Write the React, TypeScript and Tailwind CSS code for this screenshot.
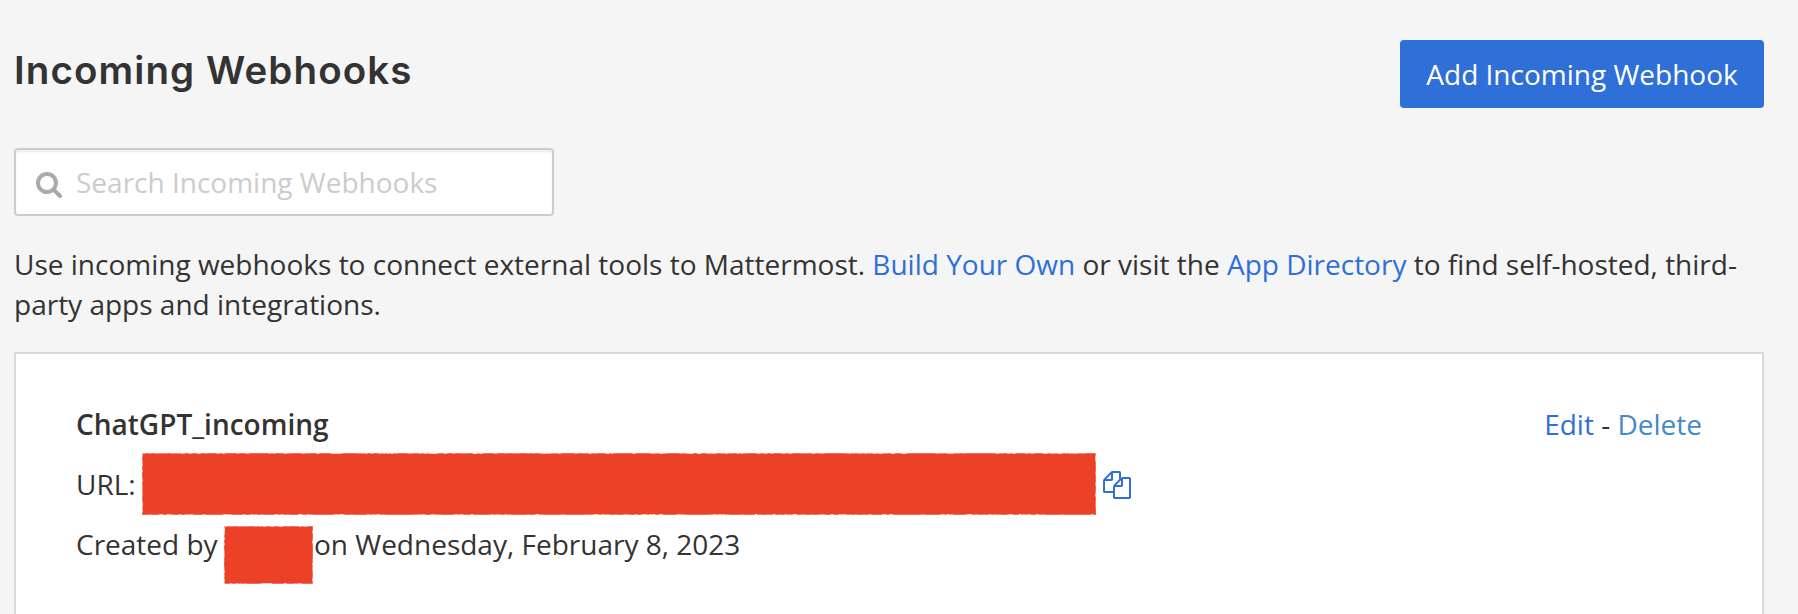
import React from "react";

function SearchIcon() {
  return (
    <svg viewBox="0 0 1792 1792" className="h-7 w-7 shrink-0 fill-[#aaaaaa]" aria-hidden="true">
      <path d="M1216 832q0-185-131.5-316.5t-316.5-131.5-316.5 131.5-131.5 316.5 131.5 316.5 316.5 131.5 316.5-131.5 131.5-316.5zm512 832q0 52-38 90t-90 38q-54 0-90-38l-343-342q-179 124-399 124-143 0-273.5-55.5t-225-150-150-225-55.5-273.5 55.5-273.5 150-225 225-150 273.5-55.5 273.5 55.5 225 150 150 225 55.5 273.5q0 220-124 399l343 343q37 37 37 90z" />
    </svg>
  );
}

function CopyIcon() {
  return (
    <svg viewBox="0 0 1792 1792" className="h-7 w-7 shrink-0 fill-[#2f6fd8]" aria-hidden="true">
      <path d="M1696 384q40 0 68 28t28 68v1216q0 40-28 68t-68 28h-960q-40 0-68-28t-28-68v-288h-544q-40 0-68-28t-28-68v-672q0-40 20-88t48-76l408-408q28-28 76-48t88-20h416q40 0 68 28t28 68v328q68-40 128-40h416zm-544 213l-299 299h299v-299zm-640-384l-299 299h299v-299zm196 647l316-316v-416h-384v416q0 40-28 68t-68 28h-416v640h512v-256q0-40 20-88t48-76zm956 804v-1152h-384v416q0 40-28 68t-68 28h-416v640h896z" />
    </svg>
  );
}

/* Closed outline of a rectangle whose edges wobble slightly, like a marker fill. */
function roughRect(width: number, height: number): string {
  let seed = 7;
  const jitter = () => {
    seed = (seed * 16807) % 2147483647;
    return 0.15 + (seed / 2147483647) ** 3 * 0.8;
  };
  const points: string[] = [];
  for (let x = 0; x < width; x += 2) points.push(`${x} ${jitter()}`);
  for (let y = 0; y < height; y += 2) points.push(`${width - jitter()} ${y}`);
  for (let x = width; x > 0; x -= 2) points.push(`${x} ${height - jitter()}`);
  for (let y = height; y > 0; y -= 2) points.push(`${jitter()} ${y}`);
  return `M${points.join("L")}Z`;
}

function Redaction({ width, height, className }: { width: number; height: number; className: string }) {
  return (
    <svg width={width} height={height} className={`shrink-0 fill-[#ec4027] ${className}`} aria-hidden="true">
      <path d={roughRect(width, height)} />
    </svg>
  );
}

export default function App() {
  return (
    <div className="h-[614px] overflow-hidden bg-[#f5f5f5] pt-10 pr-[34px] pl-3.5 font-['Open_Sans',sans-serif] text-[28px] leading-10 text-[#333333]">
      <header className="flex items-start justify-between">
        <h1 className="mt-1.5 font-['Inter',sans-serif] text-[38.5px] leading-[48px] font-semibold tracking-[1.1px]">
          Incoming Webhooks
        </h1>
        <button className="flex h-[68px] w-[364px] items-center justify-center rounded bg-[#2f6fd8] whitespace-nowrap text-white">
          Add Incoming Webhook
        </button>
      </header>

      <label className="mt-10 flex h-[68px] w-[540px] items-center gap-[13px] rounded border-2 border-[#cccccc] bg-white pl-[19px] shadow-[inset_0_2px_2px_rgba(0,0,0,0.075)]">
        <span className="pt-1"><SearchIcon /></span>
        <input
          className="h-full min-w-0 flex-1 bg-transparent outline-none placeholder:text-[#cccccc]"
          placeholder="Search Incoming Webhooks"
        />
      </label>

      <p className="mt-7">
        Use incoming webhooks to connect external tools to Mattermost.{" "}
        <a className="text-[#2f6fd8]">Build Your Own</a> or visit the{" "}
        <a className="text-[#2f6fd8]">App Directory</a> to find self-hosted, third-
        <br />
        party apps and integrations.
      </p>

      <section className="mt-7 h-[300px] border-2 border-[#d9d9d9] bg-white px-[60px] pt-[50px]">
        <div className="flex justify-between">
          <strong className="font-semibold">ChatGPT_incoming</strong>
          <span className="whitespace-pre">
            <a className="text-[#2f6fd8]">Edit</a> - <a className="text-[#428bca]">Delete</a>
          </span>
        </div>
        <div className="mt-5 flex h-10 items-center">
          <span className="w-[66px]">URL:</span>
          <Redaction width={954} height={62} className="" />
          <span className="ml-[7px] pt-0.5"><CopyIcon /></span>
        </div>
        <div className="mt-5 flex h-10 items-start">
          <span className="w-[148px]">Created by</span>
          <Redaction width={89} height={58} className="mt-0.5" />
          <span className="ml-px">on Wednesday, February 8, 2023</span>
        </div>
      </section>
    </div>
  );
}
